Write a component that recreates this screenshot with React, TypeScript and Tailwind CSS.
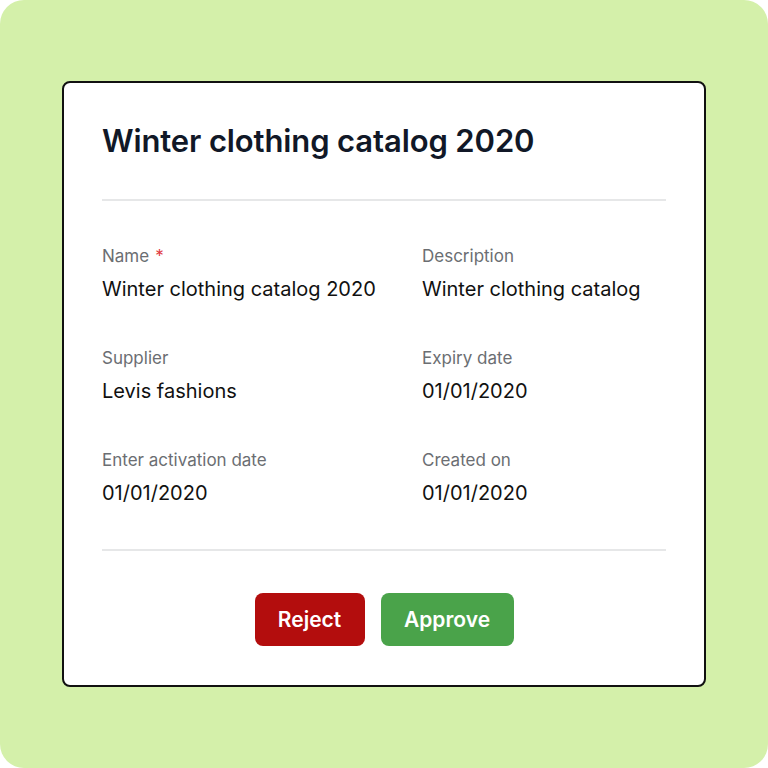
import React from "react";

const fields = [
  { label: "Name", value: "Winter clothing catalog 2020", required: true },
  { label: "Description", value: "Winter clothing catalog" },
  { label: "Supplier", value: "Levis fashions" },
  { label: "Expiry date", value: "01/01/2020" },
  { label: "Enter activation date", value: "01/01/2020" },
  { label: "Created on", value: "01/01/2020" },
];

export default function App() {
  return (
    <div className="w-[768px] h-[768px] bg-white font-['Inter',sans-serif]">
      <div className="w-full h-full rounded-[24px] bg-[#d4f0aa] flex items-center justify-center">
        {/* Card */}
        <div className="w-[644px] h-[606px] bg-white border-2 border-[#111] rounded-[8px] px-[38px] pt-[38px]">
          <h1 className="text-[31px] leading-[40px] font-semibold text-[#111827] tracking-[-0.004em]">
            Winter clothing catalog 2020
          </h1>
          <div className="mt-[38px] h-[2px] bg-[#e6e7e8]" />

          <div className="grid grid-cols-[320px_1fr] gap-y-[47px] pt-[45px] pb-[44px]">
            {fields.map((f) => (
              <div key={f.label} className="flex flex-col gap-[11px]">
                <div className="text-[17px] leading-[20px] text-[#6b6e72]">
                  {f.label}
                  {f.required && <span className="text-[#e0393e] ml-[6px]">*</span>}
                </div>
                <div className="text-[20px] leading-[24px] text-[#111]">{f.value}</div>
              </div>
            ))}
          </div>

          <div className="h-[2px] bg-[#e6e7e8]" />

          <div className="flex justify-center gap-4 pt-[42px]">
            <button className="w-[110px] h-[53px] rounded-[8px] bg-[#b30d0d] text-white text-[21px] font-semibold">
              Reject
            </button>
            <button className="w-[133px] h-[53px] rounded-[8px] bg-[#4aa34a] text-white text-[21px] font-semibold">
              Approve
            </button>
          </div>
        </div>
      </div>
    </div>
  );
}
